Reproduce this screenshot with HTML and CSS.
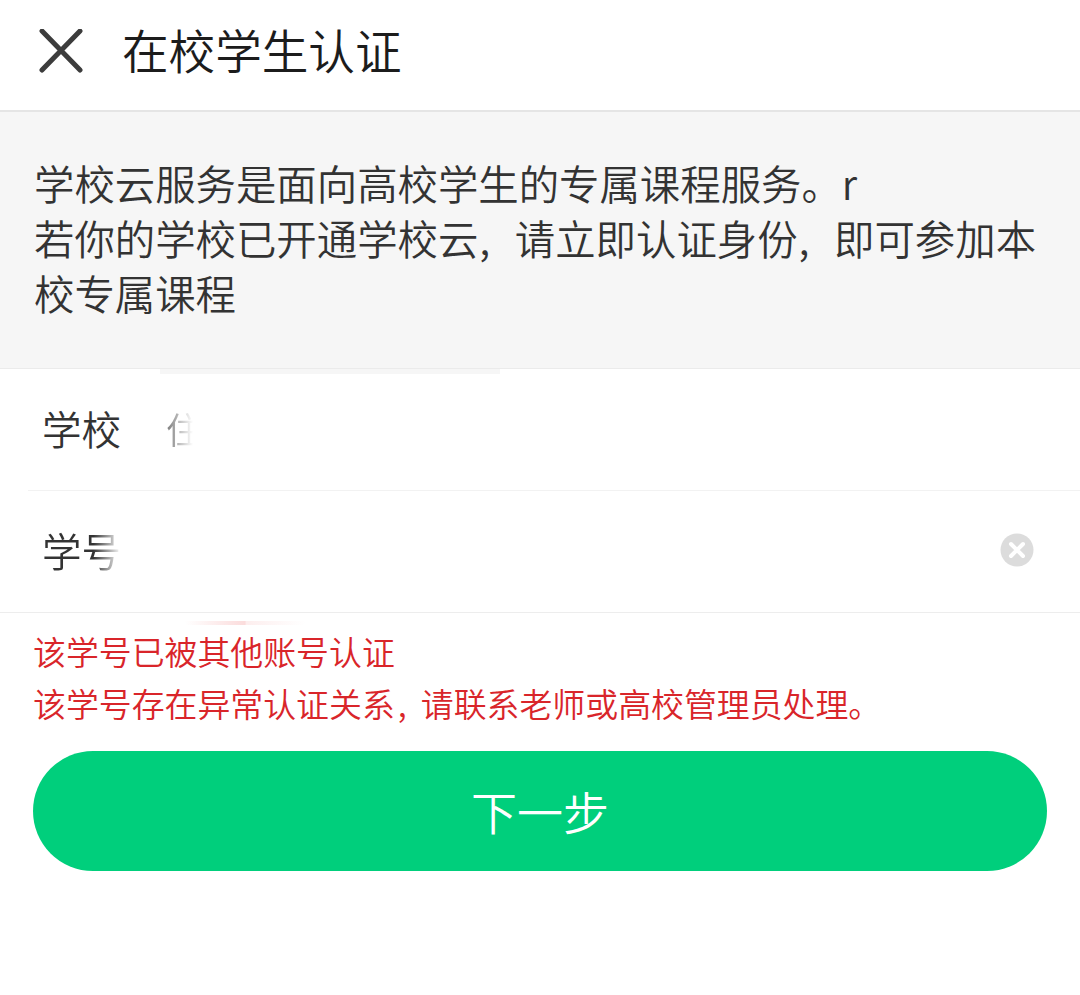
FILE: index.html
```html
<!DOCTYPE html>
<html lang="zh-CN">
<head>
<meta charset="utf-8">
<title>在校学生认证</title>
<link rel="stylesheet" href="styles.css">
</head>
<body>
<header class="bar">
  <svg class="close" viewBox="0 0 44 44" width="44" height="44"><path d="M3 2 L41 41 M41 2 L3 41" fill="none" stroke="#3c3c3c" stroke-width="5" stroke-linecap="round"/></svg>
  <h1 class="title">在校学生认证</h1>
</header>
<section class="notice">
  <p>学校云服务是面向高校学生的专属课程服务。r</p>
  <p>若你的学校已开通学校云<span class="comma">,</span>请立即认证身份<span class="comma">,</span>即可参加本校专属课程</p>
</section>
<form class="form">
  <div class="patch-gray"></div>
  <div class="row row-school">
    <span class="label">学校</span>
    <span class="smudge">住</span>
  </div>
  <div class="row row-id">
    <span class="label label-fade">学号</span>
    <svg class="clear" viewBox="0 0 34 34" width="34" height="34"><circle cx="17" cy="17" r="16.5" fill="#dcdcdc"/><path d="M11 11 L23 23 M23 11 L11 23" stroke="#fff" stroke-width="4" stroke-linecap="round"/></svg>
  </div>
  <div class="patch-pink"></div>
</form>
<div class="errors">
  <p>该学号已被其他账号认证</p>
  <p>该学号存在异常认证关系<span class="comma-red">,</span>请联系老师或高校管理员处理。</p>
</div>
<div class="action"><button class="next" type="button">下一步</button></div>
</body>
</html>
```

FILE: styles.css
```css
html, body { margin: 0; padding: 0; background: #fff; }
body { width: 1080px; height: 995px; overflow: hidden; font-family: "Noto Sans CJK SC", "Noto Sans", sans-serif; font-weight: 350; color: #333; }
p, h1 { margin: 0; }
.bar { height: 112px; box-sizing: border-box; display: flex; align-items: center; padding: 0 0 9px 39px; border-bottom: 2px solid #e5e5e5; }
.close { flex: none; }
.title { margin: 0 0 4px 39px; font-size: 46.6px; font-weight: 350; line-height: 60px; color: #1c1c1c; }
.notice { height: 257px; box-sizing: border-box; padding: 43px 30px 0 34px; background: #f6f6f6; font-size: 40.4px; line-height: 55px; color: #333; border-bottom: 1px solid #ebebeb; }
.comma { display: inline-block; width: 36.5px; padding-left: 1px; box-sizing: border-box; }
.comma-red { display: inline-block; width: 26px; padding-left: 3px; box-sizing: border-box; }
.form { position: relative; }
.patch-gray { position: absolute; left: 160px; top: 0; width: 340px; height: 5px; background: #f6f6f6; }
.patch-pink { position: absolute; left: 185px; top: 252px; width: 120px; height: 4px; background: linear-gradient(90deg, #fff 0%, #fbdcdc 50%, #fdeeee 51%, #fff 100%); }
.row { height: 122px; box-sizing: border-box; display: flex; align-items: center; border-bottom: 1px solid #f2f2f2; }
.row-school { margin-left: 28px; padding: 0 46px 3px 14px; }
.row-id { padding: 0 46px 3px 42px; border-bottom-color: #ededed; justify-content: space-between; }
.label { font-size: 39.5px; line-height: 50px; color: #333; }
.label-fade { background: linear-gradient(90deg, #333 65%, #fff 100%); -webkit-background-clip: text; background-clip: text; color: transparent; }
.smudge { margin-left: 45px; font-size: 36px; line-height: 50px; background: linear-gradient(90deg, #777 0%, #bbb 35%, #fff 75%); -webkit-background-clip: text; background-clip: text; color: transparent; }
.errors { padding: 12px 33px 0; font-size: 32.9px; line-height: 52px; color: #d9252a; }
.action { padding: 22px 33px 0; }
.next { display: block; width: 100%; height: 120px; border: 0; border-radius: 60px; background: #00cf7c; color: #fff; font-family: inherit; font-weight: 350; font-size: 46px; line-height: 60px; padding: 0 0 3px; }
```
